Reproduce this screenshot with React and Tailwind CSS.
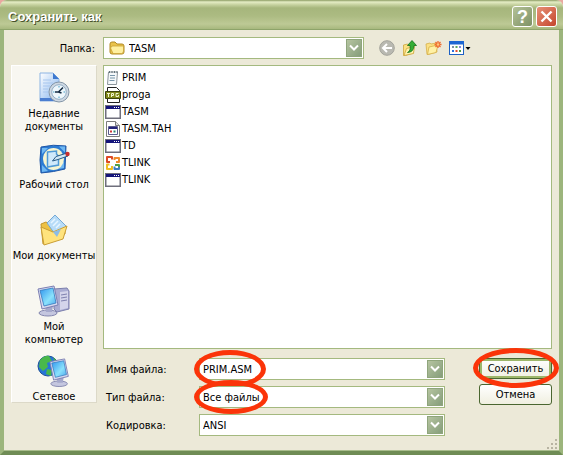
import React from "react";

const FONT = "font-['DejaVu_Sans_Condensed','Liberation_Sans',sans-serif]";

function Chevron() {
  return (
    <span className="pointer-events-none absolute top-px right-px bottom-px flex w-4 items-center justify-center border border-[#8fa57c] bg-linear-to-br from-[#b5c4a0] to-[#869e7b]">
      <svg width="10" height="8" viewBox="0 0 10 8" fill="none" stroke="#fff" strokeWidth="2">
        <path d="M1 1.5l4 4 4-4" />
      </svg>
    </span>
  );
}

function Ring({ className }) {
  return <span className={`pointer-events-none absolute rounded-[50%] border-[5px] border-[#fb3409] ${className}`} />;
}

function FolderIcon() {
  return (
    <svg width="16" height="14" viewBox="0 0 16 14">
      <path d="M1 3q0-2 2-2h3l2 2h5q2 0 2 2v6q0 2-2 2H3q-2 0-2-2z" fill="#e9c24b" stroke="#b18b26" />
      <path d="M3 5h11.500v5q0 2.500-2 2.500H4L1.500 7z" fill="#fff0a0" stroke="#c9a236" strokeWidth=".8" />
    </svg>
  );
}

function BackIcon() {
  return (
    <svg width="16" height="16" viewBox="0 0 16 16">
      <circle cx="8" cy="8" r="7.300" fill="#b9b9b1" stroke="#a3a39b" />
      <path d="M13 8H4M8 4L4 8l4 4" fill="none" stroke="#fff" strokeWidth="2" />
    </svg>
  );
}

function UpIcon() {
  return (
    <svg width="16" height="16" viewBox="0 0 16 16">
      <path d="M1.500 5l4-1 1 1 5-1v9l-8 2.500h-2z" fill="#fbe083" stroke="#cda63c" strokeWidth=".8" />
      <path d="M2 15.500L4.500 8.500l8-2-1 7z" fill="#fff3ad" stroke="#cda63c" strokeWidth=".8" />
      <path d="M5.500 12.500Q9 11 8 5.500H5.500L10 .5l4.500 5H12q0 6.500-6.500 7z" fill="#35ad35" stroke="#127019" strokeWidth=".8" />
    </svg>
  );
}

function NewFolderIcon() {
  return (
    <svg width="17" height="16" viewBox="0 0 17 16">
      <path d="M1 4l4-1 1 1 5-1 1 9-9 2.500H2z" fill="#fbe083" stroke="#d6b04a" strokeWidth=".8" />
      <path d="M2.500 14.500L4 7l9-2-2 7.500z" fill="#fff1a5" stroke="#d6b04a" strokeWidth=".8" />
      <path d="M13 1v7M9.500 4.500h7M10.500 2l5 5M15.500 2l-5 5" stroke="#ef6a2c" strokeWidth="1.300" />
      <circle cx="13" cy="4.500" r="1.300" fill="#ffc477" />
    </svg>
  );
}

function ViewIcon() {
  return (
    <svg width="22" height="14" viewBox="0 0 22 14">
      <rect x=".5" y=".5" width="14" height="13" fill="#fff" stroke="#1d61c4" />
      <path d="M0 0h15v3.500H0z" fill="#1d66d2" />
      <path d="M3 5h2v2H3z" fill="#7b8fa5" />
      <path d="M6.500 5h2v2h-2z" fill="#5ba75b" />
      <path d="M10 5h2v2h-2z" fill="#8585d7" />
      <path d="M3 9h2v2H3z" fill="#2c70dc" />
      <path d="M6.500 9h2v2h-2z" fill="#e04b2d" />
      <path d="M10 9h2v2h-2z" fill="#4a9f45" />
      <path d="M16.500 6h5L19 9z" fill="#000" />
    </svg>
  );
}

function RecentIcon() {
  return (
    <svg width="32" height="32" viewBox="0 0 32 32">
      <defs>
        <linearGradient id="recentPage" x1="0" y1="0" x2="1" y2="1">
          <stop stopColor="#fff" />
          <stop offset="1" stopColor="#7fb1ee" />
        </linearGradient>
      </defs>
      <path d="M2 1h13l6 6v22H2z" fill="url(#recentPage)" stroke="#8db4e3" />
      <path d="M2 26h19v3H2z" fill="#4b7ed0" />
      <path d="M15 1v6h6z" fill="#3d78cf" />
      <path d="M5 8h8M5 11h10M5 14h7M5 17h5M5 20h5" stroke="#a7c6ee" />
      <circle cx="21" cy="20" r="10" fill="#ced8e2" stroke="#8496a8" />
      <circle cx="21" cy="20" r="7.300" fill="#eef7fc" stroke="#93adc4" />
      <path d="M21 14v1.500M21 24.500V26M15 20h1.500M25.500 20H27" stroke="#45a0c8" />
      <path d="M25 15.500L20.500 20H17M20.500 20l3 1" fill="none" stroke="#162c43" strokeWidth="1.600" />
    </svg>
  );
}

function DesktopIcon() {
  return (
    <svg width="32" height="32" viewBox="0 0 32 32">
      <path d="M3 4q12-3 25-1l-1 23q-11 3-24 4Q1 17 3 4z" fill="#2c7bd3" stroke="#2057a6" />
      <path d="M4 5h6l-6 6zM21 3.500h6v6zM4 22v7l6-1zM26 18v7l-5 1z" fill="#6fb8f2" />
      <ellipse cx="15.500" cy="16" rx="10.500" ry="11" fill="#f6f5d2" />
      <path d="M9.500 9l9-1v3l2 2v9l-11 2z" fill="#cfe9fb" stroke="#4f9ad6" strokeWidth="1.500" />
      <path d="M29 10L18 13.500 14.500 18l5.500-1.500L30 13z" fill="#d0e8f6" stroke="#285984" />
      <circle cx="29.500" cy="11" r="2.200" fill="#c62f2f" />
    </svg>
  );
}

function DocumentsIcon() {
  return (
    <svg width="32" height="32" viewBox="0 0 32 32">
      <path d="M3 10l5-2 3 2 12-2 4 3v9L5 30z" fill="#edc143" stroke="#c4962d" />
      <path d="M9 9l8-8 11 11-9 11z" fill="#b7dcf8" stroke="#75a9d5" />
      <path d="M13 9l4-4M15 12l5-5M18 14l4-4" stroke="#e7f5ff" strokeWidth="1.500" />
      <path d="M3 13l12 5 14-6-4 13L6 31z" fill="#ffe37d" stroke="#c99d34" />
      <path d="M15 18l8-3-4 8z" fill="#8bbce7" />
    </svg>
  );
}

function Monitor() {
  return (
    <g>
      <ellipse cx="11" cy="28" rx="9" ry="3" fill="#c4c6df" stroke="#8386ae" />
      <path d="M8 21h8l-1 6H9z" fill="#a5a8cb" />
      <path d="M1 4L17 1l4 19L5 24z" fill="#d7d9ef" stroke="#7c7fb3" />
      <path d="M3 5.500l13-2.500 3 15-12 3z" fill="url(#screenBlue)" stroke="#3478bd" strokeWidth=".8" />
    </g>
  );
}

function ComputerIcon() {
  return (
    <svg width="34" height="32" viewBox="0 0 34 32">
      <defs>
        <linearGradient id="screenBlue" x1="0" y1="0" x2="1" y2="1">
          <stop stopColor="#2f94ed" />
          <stop offset=".6" stopColor="#8ae2fc" />
          <stop offset="1" stopColor="#4ea7ec" />
        </linearGradient>
      </defs>
      <path d="M17 4l13-1 2 3v18l-12 3-3-3z" fill="#a9acd2" stroke="#7c7fad" />
      <path d="M23 7l8-1v17l-8 2z" fill="#d4d5eb" />
      <path d="M24 10l6-1M24 13l6-1M24 16l6-1" stroke="#7e81ae" />
      <Monitor />
    </svg>
  );
}

function NetworkIcon() {
  return (
    <svg width="34" height="32" viewBox="0 0 34 32">
      <circle cx="11" cy="11" r="10" fill="#2675d6" stroke="#1d5099" />
      <path d="M3 5q5-5 9-4l3 5-5 2 1 4-5 4-4-4zM10 14l5 1-1 6-5-2zM16 2l4 4-2 2z" fill="#49b84b" />
      <g transform="translate(12 3) scale(.92)">
        <Monitor />
      </g>
    </svg>
  );
}

function FileIcon({ kind }) {
  if (kind === "text")
    return (
      <svg width="16" height="16" viewBox="0 0 16 16">
        <path d="M3.500 2h9l-1 12.500h-9z" fill="#f5f8fa" stroke="#8b949b" />
        <path d="M5 5.500h5M5 8h5M4.500 10.500h5" stroke="#7795aa" />
        <path d="M4.500 1v2M7 1v2M9.500 1v2M12 1v2" stroke="#66757d" />
      </svg>
    );
  if (kind === "jpg")
    return (
      <svg width="16" height="16" viewBox="0 0 16 16">
        <path d="M2.500.5h9l3 3v12h-12z" fill="#fff" stroke="#222" />
        <path d="M.5 4.500h15v7H.5z" fill="#7f8718" stroke="#3d430b" />
        <path d="M2 6.500h3M3.500 6v4M6.500 10V6.500h2v2h-2M13.500 6.500h-2.500v3h2.500V8" fill="none" stroke="#f3f5d0" />
      </svg>
    );
  if (kind === "tah")
    return (
      <svg width="16" height="16" viewBox="0 0 16 16">
        <path d="M1.500.5h9l4 4v11h-13z" fill="#fff" stroke="#7c7c7c" />
        <path d="M10.500.5v4h4" fill="#ddd" stroke="#7c7c7c" />
        <path d="M3.500 5.500h9v8h-9z" fill="#fff" stroke="#5a5a8e" />
        <path d="M4 6h8v2H4z" fill="#23237b" />
        <path d="M5 9.500h2v2H5z" fill="#cd3838" />
        <path d="M8.500 9.500h2v2h-2z" fill="#28846d" />
      </svg>
    );
  if (kind === "office")
    return (
      <svg width="16" height="16" viewBox="0 0 16 16" fill="none" strokeWidth="2" strokeLinejoin="round">
        <path d="M5 7H2V2h5v2.500" stroke="#dd4a25" />
        <path d="M9.500 5V3H14v4h-3" stroke="#ef8b2b" />
        <path d="M4.500 9.500H2V14h5v-3" stroke="#f0bd22" />
        <path d="M10 10h4v2" stroke="#52a04c" />
        <path d="M9.500 11.500V14H14v-2" stroke="#3d80c4" />
      </svg>
    );
  return (
    <svg width="16" height="14" viewBox="0 0 16 14">
      <path d="M0 0h16v14H0z" fill="#6f6f7c" />
      <path d="M1.500 1.500h13v11h-13z" fill="#fff" />
      <path d="M1 1h14v3H1z" fill="#14147a" />
      <path d="M9 2h1v1H9zM11 2h1v1h-1zM13 2h1v1h-1z" fill="#fff" />
    </svg>
  );
}

const files = [
  ["PRIM", "text"],
  ["proga", "jpg"],
  ["TASM", "exe"],
  ["TASM.TAH", "tah"],
  ["TD", "exe"],
  ["TLINK", "office"],
  ["TLINK", "exe"],
];

const iconButton = "flex h-5 items-center justify-center";
const combo = "relative h-[22px] border border-[#a4b97f] bg-white";
const field = "block h-full w-full appearance-none bg-transparent pr-5 pl-[3px] outline-none";
const placeButton = "flex w-full flex-col items-center gap-[3px] text-center leading-[13px]";
const action = "block w-full rounded-[3px] border border-[#4a6630] bg-linear-to-b from-white to-[#f0efe0] text-center";

export default function App() {
  return (
    <div className="bg-[#e9a9a0]">
      <main className={`flex min-h-screen flex-col overflow-hidden rounded-t-[7px] bg-[#ece9d8] text-[11px] leading-[13px] text-black ${FONT}`}>
        <header className="flex h-[30px] shrink-0 items-center gap-[3px] border-b border-[#8ea46a] bg-[linear-gradient(to_bottom,#8c9c63_0px,#e4ecc4_2px,#c3cf9c_5px,#a6b67c_8px,#acbb82_16px,#bdc995_24px,#a3b57a_30px)] pt-1 pr-1.5 pl-2">
          <h1 className="grow font-['Liberation_Sans',sans-serif] text-[13px] font-bold text-white [text-shadow:1px_1px_0_#46522b]">Сохранить как</h1>
          <button aria-label="Справка" className="flex size-[21px] items-center justify-center rounded-[3px] border border-white bg-linear-to-br from-[#b5c398] to-[#7e9165] font-['Liberation_Sans',sans-serif] text-lg font-bold text-white">?</button>
          <button aria-label="Закрыть" className="flex size-[21px] items-center justify-center rounded-[3px] border border-white bg-linear-to-br from-[#e69077] to-[#c4442b]">
            <svg width="13" height="13" viewBox="0 0 13 13" stroke="#fff" strokeWidth="2.400">
              <path d="M1.500 1.500l10 10M11.500 1.500l-10 10" />
            </svg>
          </button>
        </header>

        <div className="relative flex grow flex-col border-x-4 border-b-4 border-x-[#9cb57c] border-b-[#6f8c55] px-[7px] pt-[7px] shadow-[inset_0_-1px_0_#a9bd8c]">
          <div className="flex items-center">
            <label htmlFor="folder" className="w-[92px] shrink-0 pr-2 text-right">Папка:</label>
            <div className={`${combo} w-[261px]`}>
              <span className="pointer-events-none absolute top-[3px] left-[5px]"><FolderIcon /></span>
              <select id="folder" className="block h-full w-full appearance-none bg-transparent pr-5 pl-[25px] outline-none"><option>TASM</option></select>
              <Chevron />
            </div>
            <div className="ml-[15px] flex gap-[7px]">
              <button aria-label="Назад" className={iconButton}><BackIcon /></button>
              <button aria-label="Вверх" className={iconButton}><UpIcon /></button>
              <button aria-label="Новая папка" className={iconButton}><NewFolderIcon /></button>
              <button aria-label="Вид" className={iconButton}><ViewIcon /></button>
            </div>
          </div>

          <div className="mt-[6px] flex grow gap-1.5">
            <nav className="flex h-[338px] w-[86px] shrink-0 flex-col border border-[#dcd9c8] border-t-white border-l-white bg-[#f8f7f1] pt-[6px]">
              <button className={placeButton}><RecentIcon /><span>Недавние<br />документы</span></button>
              <button className={`${placeButton} mt-[10px]`}><DesktopIcon />Рабочий стол</button>
              <button className={`${placeButton} mt-[23px]`}><DocumentsIcon /><span className="whitespace-nowrap">Мои документы</span></button>
              <button className={`${placeButton} mt-[23px]`}><ComputerIcon /><span>Мой<br />компьютер</span></button>
              <button className={`${placeButton} mt-[9px]`}><NetworkIcon />Сетевое</button>
            </nav>

            <div className="flex grow flex-col">
              <ul className="h-[284px] border border-[#a4b97f] bg-white pt-[3px] pl-px">
                {files.map(([name, kind], i) => (
                  <li key={i} className="flex h-[17px] items-center gap-px">
                    <FileIcon kind={kind} />
                    {name}
                  </li>
                ))}
              </ul>

              <div className="mt-[9px] flex items-start gap-[34px]">
                <div className="grid grow grid-cols-[96px_1fr] items-center gap-y-[6px]">
                  <label htmlFor="name" className="pl-[3px]">Имя файла:</label>
                  <div className={combo}>
                    <input id="name" defaultValue="PRIM.ASM" className={field} />
                    <Chevron />
                    <Ring className="-top-[9px] -left-1.5 h-[38px] w-[72px]" />
                  </div>
                  <label htmlFor="type" className="pl-[3px]">Тип файла:</label>
                  <div className={combo}>
                    <select id="type" className={field}><option>Все файлы</option></select>
                    <Chevron />
                    <Ring className="-top-[7px] -left-1.5 h-[34px] w-[74px]" />
                  </div>
                  <label htmlFor="encoding" className="pl-[3px]">Кодировка:</label>
                  <div className={combo}>
                    <select id="encoding" className={field}><option>ANSI</option></select>
                    <Chevron />
                  </div>
                </div>
                <div className="flex w-[73px] shrink-0 flex-col gap-[5px]">
                  <div className="relative">
                    <button className={`${action} h-[21px] shadow-[inset_0_0_0_2px_#9db76a]`}>Сохранить</button>
                    <Ring className="-top-[10px] -left-1.5 h-10 w-[86px]" />
                  </div>
                  <button className={`${action} h-[21px]`}>Отмена</button>
                </div>
              </div>
            </div>
          </div>

          <svg className="absolute right-0 bottom-0" width="13" height="13" viewBox="0 0 13 13" fill="#b8b4a2">
            <path d="M9 1h2v2H9zM5 5h2v2H5zM9 5h2v2H9zM1 9h2v2H1zM5 9h2v2H5zM9 9h2v2H9z" />
          </svg>
        </div>
      </main>
    </div>
  );
}
